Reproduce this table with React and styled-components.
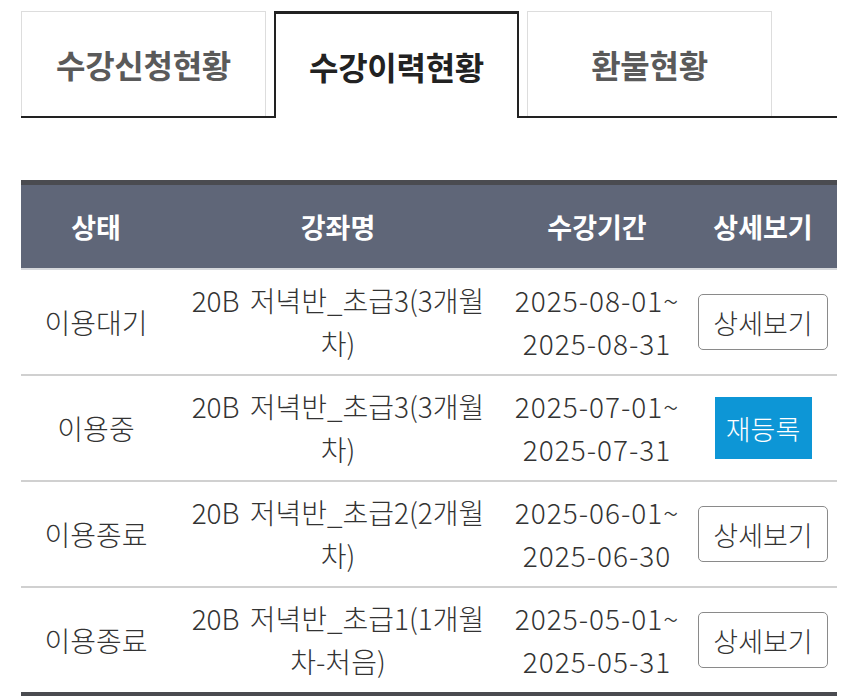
import React from "react";
import styled, { createGlobalStyle } from "styled-components";

const GlobalStyle = createGlobalStyle`
  body {
    margin: 0;
    background: #ffffff;
    font-family: "Noto Sans CJK KR", "Noto Sans", sans-serif;
    color: #333333;
  }
`;

const Page = styled.div`
  width: 816px;
  padding: 11px 19px 0 21px;
`;

const TabBar = styled.div`
  display: flex;
  gap: 8px;
  border-bottom: 2px solid #222222;
`;

const Tab = styled.div`
  width: 245px;
  height: ${p => (p.$active ? "107px" : "105px")};
  box-sizing: border-box;
  display: flex;
  align-items: center;
  justify-content: center;
  font-size: 32px;
  font-weight: 700;
  letter-spacing: -0.3px;
  background: #ffffff;
  color: ${p => (p.$active ? "#222222" : "#5a5a5a")};
  border: ${p => (p.$active ? "2px solid #222222" : "1px solid #dddddd")};
  border-top-width: ${p => (p.$active ? "3px" : "1px")};
  border-bottom: none;
  margin-bottom: ${p => (p.$active ? "-2px" : "0")};
`;

const Table = styled.table`
  width: 816px;
  margin-top: 62px;
  border-collapse: collapse;
  table-layout: fixed;
  border-top: 5px solid #4a4b50;
  border-bottom: 5px solid #4a4b50;
`;

const Head = styled.th`
  height: 83px;
  padding: 0;
  background: #5f6678;
  color: #ffffff;
  font-size: 27px;
  font-weight: 700;
  text-align: center;
  border-bottom: 2px solid #d6d8dc;
`;

const Row = styled.tr`
  & + & td {
    border-top: 2px solid #d0d0d0;
  }
`;

const Cell = styled.td`
  height: 104px;
  padding: 0 4px;
  text-align: center;
  vertical-align: middle;
  font-size: 28px;
  font-weight: 300;
  line-height: 43px;
  color: #333333;
  word-spacing: 4px;
  white-space: nowrap;
`;

const DateCell = styled(Cell)`
  padding: 0 2px;
  letter-spacing: 1px;
`;

const DetailButton = styled.button`
  width: 130px;
  height: 56px;
  border: 1px solid #8a8a8a;
  border-radius: 5px;
  background: #ffffff;
  color: #333333;
  font-family: inherit;
  font-size: 27px;
  font-weight: 300;
  padding: 0;
`;

const RenewButton = styled.button`
  width: 97px;
  height: 62px;
  border: none;
  border-radius: 0;
  background: #0d96d6;
  color: #ffffff;
  font-family: inherit;
  font-size: 27px;
  font-weight: 300;
  padding: 0;
`;

const rows = [
  { status: "이용대기", name: ["20B 저녁반_초급3(3개월", "차)"], from: "2025-08-01~", to: "2025-08-31", renew: false },
  { status: "이용중", name: ["20B 저녁반_초급3(3개월", "차)"], from: "2025-07-01~", to: "2025-07-31", renew: true },
  { status: "이용종료", name: ["20B 저녁반_초급2(2개월", "차)"], from: "2025-06-01~", to: "2025-06-30", renew: false },
  { status: "이용종료", name: ["20B 저녁반_초급1(1개월", "차-처음)"], from: "2025-05-01~", to: "2025-05-31", renew: false },
];

export default function App() {
  return (
    <Page>
      <GlobalStyle />
      <TabBar>
        <Tab>수강신청현황</Tab>
        <Tab $active>수강이력현황</Tab>
        <Tab>환불현황</Tab>
      </TabBar>
      <Table>
        <colgroup>
          <col style={{ width: 150 }} />
          <col style={{ width: 334 }} />
          <col style={{ width: 184 }} />
          <col style={{ width: 148 }} />
        </colgroup>
        <thead>
          <tr>
            <Head>상태</Head>
            <Head>강좌명</Head>
            <Head>수강기간</Head>
            <Head>상세보기</Head>
          </tr>
        </thead>
        <tbody>
          {rows.map((r, i) => (
            <Row key={i}>
              <Cell>{r.status}</Cell>
              <Cell>
                {r.name[0]}
                <br />
                {r.name[1]}
              </Cell>
              <DateCell>
                {r.from}
                <br />
                {r.to}
              </DateCell>
              <Cell>
                {r.renew ? (
                  <RenewButton>재등록</RenewButton>
                ) : (
                  <DetailButton>상세보기</DetailButton>
                )}
              </Cell>
            </Row>
          ))}
        </tbody>
      </Table>
    </Page>
  );
}
